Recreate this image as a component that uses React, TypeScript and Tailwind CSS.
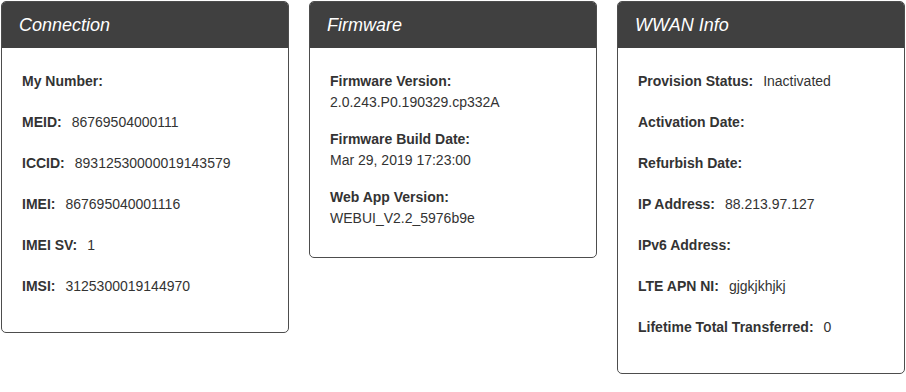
const connection: [string, string][] = [
  ["My Number:", ""],
  ["MEID:", "86769504000111"],
  ["ICCID:", "89312530000019143579"],
  ["IMEI:", "867695040001116"],
  ["IMEI SV:", "1"],
  ["IMSI:", "3125300019144970"],
];

const firmware: [string, string][] = [
  ["Firmware Version:", "2.0.243.P0.190329.cp332A"],
  ["Firmware Build Date:", "Mar 29, 2019 17:23:00"],
  ["Web App Version:", "WEBUI_V2.2_5976b9e"],
];

const wwan: [string, string][] = [
  ["Provision Status:", "Inactivated"],
  ["Activation Date:", ""],
  ["Refurbish Date:", ""],
  ["IP Address:", "88.213.97.127"],
  ["IPv6 Address:", ""],
  ["LTE APN NI:", "gjgkjkhjkj"],
  ["Lifetime Total Transferred:", "0"],
];

const Card = ({ title, children }: { title: string; children: React.ReactNode }) => (
  <div className="w-[288px] border border-[#4d4d4d] rounded-[5px] overflow-hidden bg-white">
    <div className="h-[46px] bg-[#404040] flex items-center pl-[17px]">
      <h2 className="text-[18px] italic text-white font-normal">{title}</h2>
    </div>
    {children}
  </div>
);

const InlineRows = ({ rows }: { rows: [string, string][] }) => (
  <div className="pt-[13px] pb-[25px] px-[20px]">
    {rows.map(([label, value]) => (
      <div key={label} className="h-[41px] flex items-center gap-[10px] text-[14px]">
        <span className="font-bold">{label}</span>
        {value && <span>{value}</span>}
      </div>
    ))}
  </div>
);

export default function App() {
  return (
    <div
      className="bg-white min-h-screen pt-px pl-px text-[#333333]"
      style={{ fontFamily: '"Liberation Sans", Arial, sans-serif' }}
    >
      <div className="flex items-start gap-[20px]">
        <Card title="Connection">
          <InlineRows rows={connection} />
        </Card>

        <Card title="Firmware">
          <div className="pt-[23px] pb-[28px] px-[20px] flex flex-col gap-[16px]">
            {firmware.map(([label, value]) => (
              <div key={label} className="text-[14px]">
                <div className="h-[21px] flex items-center font-bold">{label}</div>
                <div className="h-[21px] flex items-center">{value}</div>
              </div>
            ))}
          </div>
        </Card>

        <Card title="WWAN Info">
          <InlineRows rows={wwan} />
        </Card>
      </div>
    </div>
  );
}
